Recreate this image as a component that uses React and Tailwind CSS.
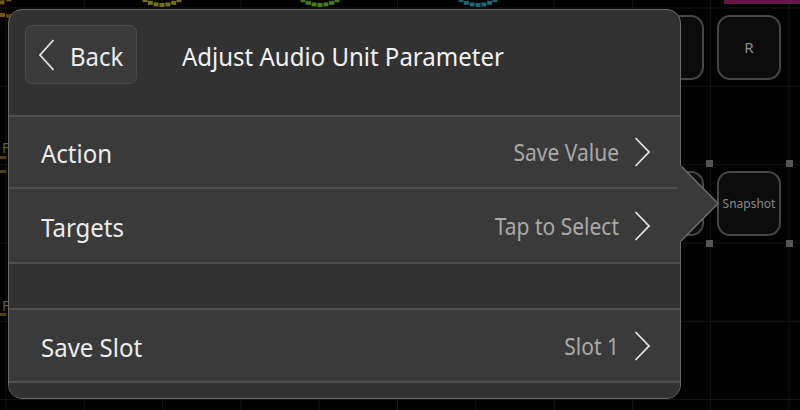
import React from "react";

const STEP = 78.3;

function Grid() {
  const xs = [];
  for (let i = 0; i < 11; i++) xs.push(6 + STEP * i);
  const ys = [];
  for (let i = 0; i < 6; i++) ys.push(8 + STEP * i);
  return (
    <svg className="absolute inset-0" width="800" height="410">
      {xs.map((x, i) => (
        <line key={"x" + i} x1={x} y1="0" x2={x} y2="410" stroke="#161616" strokeWidth="1" />
      ))}
      {ys.map((y, i) => (
        <line key={"y" + i} x1="0" y1={y} x2="800" y2={y} stroke="#161616" strokeWidth="1" />
      ))}
    </svg>
  );
}

function Dots({ cx, cy, r, from, to, n, color }) {
  const pts = [];
  for (let i = 0; i < n; i++) {
    const a = ((from + ((to - from) * i) / (n - 1)) * Math.PI) / 180;
    pts.push([cx + r * Math.cos(a), cy + r * Math.sin(a)]);
  }
  return pts.map(([x, y], i) => (
    <rect key={i} x={x - 2.5} y={y - 2} width="5" height="4" fill={color} />
  ));
}

function Meters() {
  return (
    <svg className="absolute inset-0" width="800" height="410">
      <Dots cx={-8} cy={-28} r={32} from={45} to={85} n={4} color="#7a5418" />
      <rect x="0" y="13" width="5" height="4" fill="#7a5418" />
      <rect x="6" y="14" width="5" height="4" fill="#5a3c14" />
      <Dots cx={162} cy={-27} r={32} from={58} to={122} n={7} color="#77701a" />
      <Dots cx={320} cy={-27} r={32} from={58} to={122} n={7} color="#467a1a" />
      <Dots cx={478} cy={-27} r={32} from={58} to={122} n={7} color="#236474" />
      <rect x="724" y="0" width="76" height="4" fill="#661649" />
      <rect x="0" y="156" width="6" height="3" fill="#5a3c14" />
      <rect x="0" y="170" width="6" height="3" fill="#5a3c14" />
      <rect x="0" y="313" width="6" height="3" fill="#5a3c14" />
    </svg>
  );
}

function CanvasButton({ x, y, w = 64, h = 65, label, small }) {
  return (
    <div
      className="absolute flex items-center justify-center rounded-[13px] border-2 border-[#464646] bg-[#0c0c0c] text-[#8a8a8a]"
      style={{ left: x, top: y, width: w, height: h, fontFamily: '"Noto Sans", sans-serif', fontSize: small ? 12 : 15 }}
    >
      {label}
    </div>
  );
}

function Handle({ x, y }) {
  return <div className="absolute h-[7px] w-[7px] bg-[#555555]" style={{ left: x, top: y }} />;
}

function ChevronRight() {
  return (
    <svg width="17" height="30" viewBox="0 0 17 30" className="shrink-0">
      <polyline points="1.5,1 15,15 1.5,29" fill="none" stroke="#e2e2e2" strokeWidth="1.8" strokeLinejoin="miter" />
    </svg>
  );
}

function ChevronLeft() {
  return (
    <svg width="17" height="32" viewBox="0 0 17 32" className="shrink-0">
      <polyline points="15.5,1 2,16 15.5,31" fill="none" stroke="#e2e2e2" strokeWidth="1.8" />
    </svg>
  );
}

function Row({ label, value, h }) {
  return (
    <div
      className="flex items-center justify-between border-t-2 border-[#4f4f4f] bg-[#3a3a3a] pl-[32px] pr-[29px]"
      style={{ height: h }}
    >
      <span className="inline-block scale-y-[1.08] pt-[2px] text-[24px] text-[#ececec]">{label}</span>
      <div className="flex items-center gap-[15px]">
        <span className="inline-block scale-y-[1.08] pt-[2px] text-[21px] text-[#a9a9a9]">{value}</span>
        <ChevronRight />
      </div>
    </div>
  );
}

export default function App() {
  return (
    <div className="relative h-[410px] w-[800px] overflow-hidden bg-black">
      <Grid />
      <Meters />
      <span className="absolute left-[2px] top-[137px] text-[14px] text-[#5a5a5a]" style={{ fontFamily: '"Noto Sans", sans-serif' }}>F</span>
      <span className="absolute left-[2px] top-[295px] text-[14px] text-[#5a5a5a]" style={{ fontFamily: '"Noto Sans", sans-serif' }}>F</span>

      <CanvasButton x={640} y={15} label="" />
      <CanvasButton x={717} y={15} label="R" />
      <CanvasButton x={640} y={171} label="" />
      <CanvasButton x={717} y={171} label="Snapshot" small />
      <Handle x={706} y={160} />
      <Handle x={786} y={160} />
      <Handle x={706} y={240} />
      <Handle x={786} y={240} />

      {/* Popover */}
      <div
        className="absolute left-[8px] top-[9px] h-[390px] w-[673px] rounded-[14px] border border-[#6a6a6a] bg-[#323232]"
        style={{ fontFamily: '"Noto Sans", sans-serif' }}
      >
        <div className="flex h-full flex-col overflow-hidden rounded-[13px]">
          <div className="flex h-[105px] shrink-0 items-start pl-[16px] pt-[15px]">
            <div className="flex h-[59px] w-[112px] items-center gap-[15px] rounded-[7px] border border-[#4a4a4a] bg-[#3a3a3a] pl-[12px]">
              <ChevronLeft />
              <span className="inline-block scale-y-[1.08] pt-[2px] text-[24px] text-[#ededed]">Back</span>
            </div>
            <div className="ml-[45px] flex h-[59px] items-center text-[24px] text-[#f2f2f2]">
              <span className="inline-block scale-y-[1.08] pt-[2px]">Adjust Audio Unit Parameter</span>
            </div>
          </div>
          <Row label="Action" value="Save Value" h={72} />
          <Row label="Targets" value="Tap to Select" h={75} />
          <div className="h-[46px] shrink-0 border-t-2 border-[#4f4f4f] bg-[#323232]" />
          <Row label="Save Slot" value="Slot 1" h={73} />
          <div className="flex-1 border-t-2 border-[#4f4f4f] bg-[#323232]" />
        </div>
        {/* arrow */}
        <svg className="absolute left-[669px] top-[156px]" width="42" height="80" viewBox="0 0 42 80">
          <polygon points="0,0 3,0 40,37.5 3,75 0,75" fill="#3a3a3a" />
          <polyline points="3,0 40,37.5 3,75" fill="none" stroke="#6a6a6a" strokeWidth="1.5" />
        </svg>
      </div>
    </div>
  );
}
